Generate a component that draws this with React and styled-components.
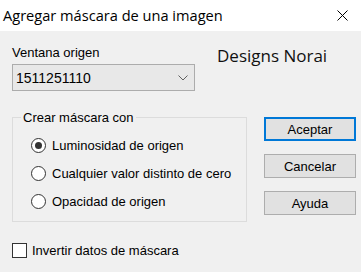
import React from 'react';
import styled, { createGlobalStyle } from 'styled-components';

const GlobalStyle = createGlobalStyle`
  html, body {
    margin: 0;
    padding: 0;
    background: #f0f0f0;
  }
`;

const Window = styled.div`
  width: 361px;
  height: 272px;
  display: flex;
  flex-direction: column;
  background: #f0f0f0;
  font-family: 'Liberation Sans', Arial, sans-serif;
  font-size: 13px;
  color: #000;
  overflow: hidden;
`;

const TitleBar = styled.div`
  height: 31px;
  flex: none;
  background: #fff;
  display: flex;
  align-items: center;
  justify-content: space-between;
  padding: 0 13px 0 3px;
`;

const Title = styled.span`
  font-family: 'Open Sans', 'Noto Sans', sans-serif;
  font-size: 14.6px;
  color: #000;
  margin-top: -1px;
`;

const CloseIcon = styled.svg`
  width: 11px;
  height: 11px;
  display: block;
`;

const Body = styled.div`
  display: flex;
  flex-direction: column;
  padding: 14px 0 0 12px;
`;

const TopRow = styled.div`
  display: flex;
  align-items: flex-start;
`;

const Field = styled.div`
  display: flex;
  flex-direction: column;
  width: 183px;
`;

const Label = styled.label`
  line-height: 15px;
`;

const Combo = styled.div`
  margin-top: 4px;
  height: 27px;
  box-sizing: border-box;
  border: 1px solid #acacac;
  background: #e8e8e8;
  display: flex;
  align-items: center;
  justify-content: space-between;
  padding: 0 6px 0 3px;
  font-size: 14px;
`;

const Brand = styled.div`
  margin: 1px 0 0 22px;
  font-family: 'Open Sans', 'Noto Sans', sans-serif;
  font-size: 17px;
  line-height: 20px;
  color: #111;
`;

const MiddleRow = styled.div`
  display: flex;
  align-items: flex-start;
  margin-top: 19px;
`;

const Group = styled.fieldset`
  width: 235px;
  box-sizing: border-box;
  margin: 0;
  border: 1px solid #dcdcdc;
  padding: 0;
`;

const Legend = styled.legend`
  margin-left: 8px;
  padding: 0 2px;
  line-height: 15px;
`;

const OptionList = styled.div`
  display: flex;
  flex-direction: column;
  padding: 6px 0 6px 18px;
`;

const OptionRow = styled.label`
  height: 28px;
  display: flex;
  align-items: center;
  gap: 6px;
`;

const RadioMark = styled.span`
  width: 15px;
  height: 15px;
  box-sizing: border-box;
  border: 1px solid #333;
  border-radius: 50%;
  background: #fff;
  display: flex;
  align-items: center;
  justify-content: center;

  &::after {
    content: '';
    width: 7px;
    height: 7px;
    border-radius: 50%;
    background: ${props => (props.checked ? '#333' : 'transparent')};
  }
`;

const ButtonColumn = styled.div`
  display: flex;
  flex-direction: column;
  gap: 13px;
  margin: 7px 0 0 17px;
`;

const Button = styled.button`
  width: 92px;
  height: 24px;
  box-sizing: border-box;
  background: #e1e1e1;
  border: ${props => (props.primary ? '2px solid #0078d7' : '1px solid #adadad')};
  font-family: 'Liberation Sans', Arial, sans-serif;
  font-size: 13px;
  color: #000;
  padding: 0;
  display: flex;
  align-items: center;
  justify-content: center;
`;

const CheckRow = styled.label`
  margin-top: 20px;
  display: flex;
  align-items: center;
  gap: 5px;
  height: 16px;
`;

const CheckMark = styled.span`
  width: 15px;
  height: 15px;
  box-sizing: border-box;
  border: 1px solid #333;
  background: #fff;
`;

const options = [
  { text: 'Luminosidad de origen', checked: true },
  { text: 'Cualquier valor distinto de cero', checked: false },
  { text: 'Opacidad de origen', checked: false }
];

export default function App() {
  return (
    <>
      <GlobalStyle />
      <Window>
        <TitleBar>
          <Title>Agregar máscara de una imagen</Title>
          <CloseIcon viewBox="0 0 11 11">
            <path d="M0.5 0.5 L10.5 10.5 M10.5 0.5 L0.5 10.5" stroke="#000" strokeWidth="1" fill="none" />
          </CloseIcon>
        </TitleBar>
        <Body>
          <TopRow>
            <Field>
              <Label>Ventana origen</Label>
              <Combo>
                <span>1511251110</span>
                <svg width="10" height="6" viewBox="0 0 10 6">
                  <path d="M0.5 0.5 L5 5 L9.5 0.5" stroke="#606060" strokeWidth="1" fill="none" />
                </svg>
              </Combo>
            </Field>
            <Brand>Designs Norai</Brand>
          </TopRow>
          <MiddleRow>
            <Group>
              <Legend>Crear máscara con</Legend>
              <OptionList>
                {options.map(opt => (
                  <OptionRow key={opt.text}>
                    <RadioMark checked={opt.checked} />
                    {opt.text}
                  </OptionRow>
                ))}
              </OptionList>
            </Group>
            <ButtonColumn>
              <Button primary>Aceptar</Button>
              <Button>Cancelar</Button>
              <Button>Ayuda</Button>
            </ButtonColumn>
          </MiddleRow>
          <CheckRow>
            <CheckMark />
            Invertir datos de máscara
          </CheckRow>
        </Body>
      </Window>
    </>
  );
}
